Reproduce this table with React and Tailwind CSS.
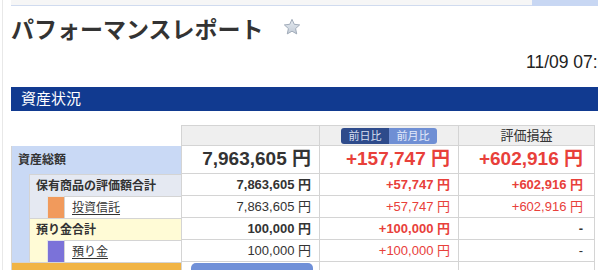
import React from 'react';

const line = 'border-[#d4d4d4]';
const red = 'text-[#e8403a]';

function Val({ w, pr = 'pr-[8px]', first, className = '', children }) {
  return (
    <div
      className={`${w} ${pr} flex items-center justify-end whitespace-nowrap border-r border-b ${line} ${first ? 'border-l' : ''} ${className}`}
    >
      {children}
    </div>
  );
}

function Star() {
  return (
    <svg width="18" height="18" viewBox="0 0 24 24">
      <defs>
        <linearGradient id="st" x1="0" y1="0" x2="0" y2="1">
          <stop offset="0" stopColor="#e6ebf1" />
          <stop offset="1" stopColor="#c3ccd7" />
        </linearGradient>
      </defs>
      <path
        d="M12 1.8l3 6.6 7.2.8-5.4 4.9 1.5 7.1L12 17.6l-6.3 3.6 1.5-7.1L1.8 9.2 9 8.4z"
        fill="url(#st)"
        stroke="#9aa5b3"
        strokeWidth="1.2"
        strokeLinejoin="round"
      />
    </svg>
  );
}

// 行ごとの数値セル (評価額 / 前日比 / 評価損益)
function Values({ a, b, c, big, bold }) {
  const size = big ? 'text-[19px]' : 'text-[13px]';
  const weight = bold ? 'font-bold' : 'font-normal';
  return (
    <>
      <Val w="w-[139px]" first className={`${size} ${weight} text-[#333]`}>{a}</Val>
      <Val w="w-[139px]" className={`${size} ${weight} ${red}`}>{b}</Val>
      <Val w="w-[136px]" pr="pr-[11px]" className={`${size} ${weight} ${c === '-' ? 'text-[#333]' : red}`}>{c}</Val>
    </>
  );
}

export default function App() {
  const rows = [
    {
      group: '保有商品の評価額合計',
      tone: 'bg-[#e5e9f2]',
      total: ['7,863,605 円', '+57,747 円', '+602,916 円'],
      item: '投資信託',
      swatch: 'bg-[#f19a5c]',
      detail: ['7,863,605 円', '+57,747 円', '+602,916 円'],
    },
    {
      group: '預り金合計',
      tone: 'bg-[#fffbd6]',
      total: ['100,000 円', '+100,000 円', '-'],
      item: '預り金',
      swatch: 'bg-[#7b72d9]',
      detail: ['100,000 円', '+100,000 円', '-'],
    },
  ];

  return (
    <div className="w-[598px] h-[270px] overflow-hidden bg-white pl-[2px] font-['Liberation_Sans','Noto_Sans_CJK_JP',sans-serif] text-[#333]">
      <div className="h-full border-l border-[#e8e8e8] pl-[8px]">
        <div className="w-[587px]">
          {/* 上部バー */}
          <div className="flex">
            <div className="flex-1 h-[6px] bg-[#f6f6f6] border-b border-[#d0dbef]" />
            <div className="w-[66px] h-[6px] bg-[#c8d7f3]" />
          </div>

          {/* タイトル */}
          <div className="mt-[12px] flex items-center h-[24px]">
            <h1 className="text-[23px] leading-[24px] font-bold text-[#333] whitespace-nowrap">パフォーマンスレポート</h1>
            <div className="ml-[19px] mt-[-6px]">
              <Star />
            </div>
          </div>

          <div className="mt-[10px] h-[20px] pl-[515px] text-[17.5px] leading-[20px] whitespace-nowrap text-[#222]">
            11/09 07:00 現在
          </div>

          {/* 資産状況 */}
          <div className="mt-[15px] h-[24px] bg-[#113a90] pl-[10px] text-[15px] leading-[24px] text-white">
            資産状況
          </div>

          {/* テーブル */}
          <div className="mt-[14px]">
            <div className="flex h-[21px]">
              <div className="w-[170px]" />
              <div className={`w-[139px] bg-[#efefef] border ${line}`} />
              <div className={`w-[139px] bg-[#efefef] border-t border-r border-b ${line} flex items-center justify-center`}>
                <div className="flex h-[16px] rounded-[3px] overflow-hidden text-[11px] leading-[16px]">
                  <span className="w-[48px] text-center bg-[#2e4b8b] text-[#d6def0]">前日比</span>
                  <span className="w-[48px] text-center bg-[#6f8fd4] text-[#e3eafa]">前月比</span>
                </div>
              </div>
              <div className={`w-[136px] bg-[#efefef] border-t border-r border-b ${line} flex items-center justify-center text-[13px]`}>
                評価損益
              </div>
            </div>

            <div className="flex h-[28px]">
              <div className={`w-[170px] bg-[#c9d9f5] border-l ${line} pl-[6px] flex items-center text-[12px] font-bold`}>
                資産総額
              </div>
              <Values a="7,963,605 円" b="+157,747 円" c="+602,916 円" big bold />
            </div>

            {rows.map((r) => (
              <React.Fragment key={r.group}>
                <div className="flex h-[22px]">
                  <div className={`w-[18px] bg-[#c9d9f5] border-l ${line}`} />
                  <div className={`w-[152px] ${r.tone} border-l border-t ${line} pl-[6px] flex items-center text-[12px] font-bold whitespace-nowrap`}>
                    {r.group}
                  </div>
                  <Values a={r.total[0]} b={r.total[1]} c={r.total[2]} bold />
                </div>
                <div className="flex h-[22px]">
                  <div className={`w-[18px] bg-[#c9d9f5] border-l ${line}`} />
                  <div className={`w-[18px] ${r.tone} border-l ${line}`} />
                  <div className={`w-[17px] ${r.swatch} border-l border-t border-[#e4e4e4]`} />
                  <div className={`w-[117px] bg-white border-l border-t ${line} pl-[7px] flex items-center text-[12px]`}>
                    <span className="underline underline-offset-2">{r.item}</span>
                  </div>
                  <Values a={r.detail[0]} b={r.detail[1]} c={r.detail[2]} />
                </div>
              </React.Fragment>
            ))}

            <div className="flex h-[10px]">
              <div className={`w-[170px] bg-[#f1b445] border-l border-t ${line}`} />
              <div className={`w-[139px] border-l border-r ${line} pl-[9px] pt-[1px]`}>
                <div className="w-[122px] h-[10px] rounded-t-[5px] bg-[#7090d8]" />
              </div>
              <div className={`w-[139px] border-r ${line}`} />
              <div className={`w-[136px] border-r ${line}`} />
            </div>
          </div>
        </div>
      </div>
    </div>
  );
}
